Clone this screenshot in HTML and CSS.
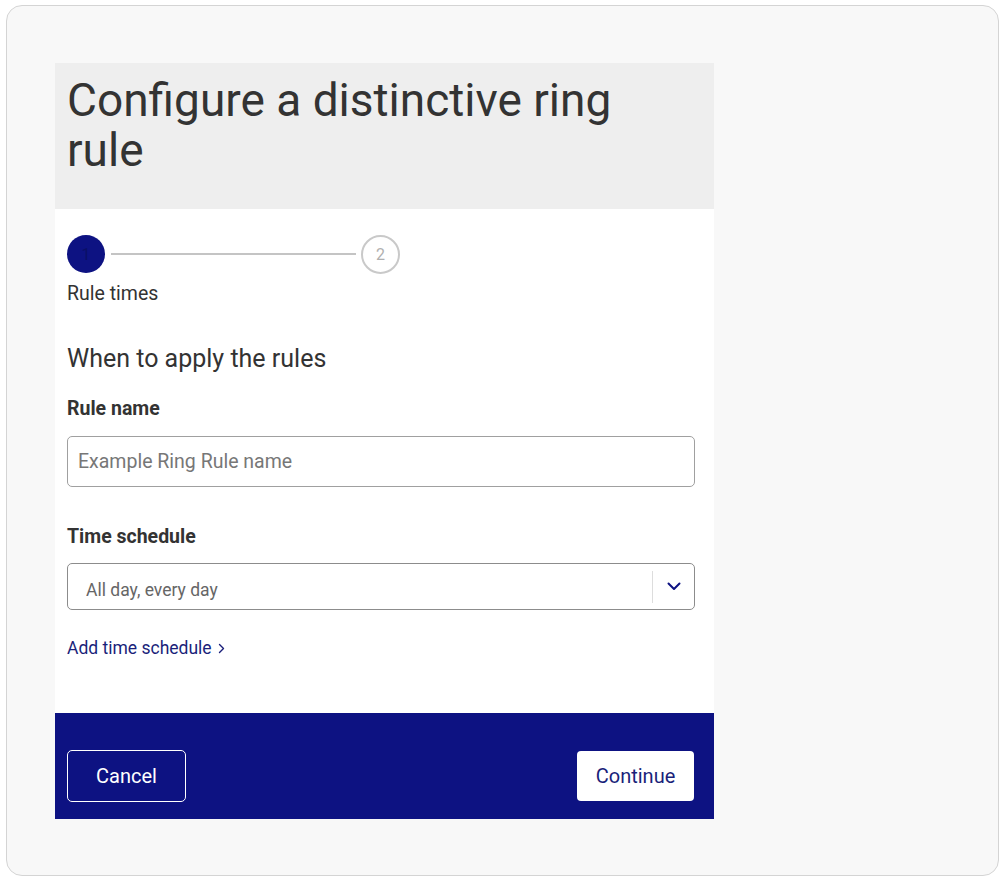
FILE: index.html
```html
<!DOCTYPE html>
<html lang="en">
<head>
<meta charset="utf-8">
<title>Configure a distinctive ring rule</title>
<link rel="stylesheet" href="styles.css">
</head>
<body>
<div class="frame">
  <div class="card">
    <div class="card-header">
      <h1 class="title">Configure a distinctive ring rule</h1>
    </div>
    <div class="card-body">
      <div class="stepper">
        <div class="step step-active">1</div>
        <div class="step-line"></div>
        <div class="step step-next">2</div>
      </div>
      <div class="step-label">Rule times</div>
      <h2 class="section-title">When to apply the rules</h2>
      <div class="field-label">Rule name</div>
      <div class="input">
        <span class="placeholder">Example Ring Rule name</span>
      </div>
      <div class="field-label second">Time schedule</div>
      <div class="select">
        <span class="select-value">All day, every day</span>
        <span class="select-divider"></span>
        <span class="select-arrow">
          <svg width="14" height="9" viewBox="0 0 14 9"><path d="M1.5 1.5 L7 7 L12.5 1.5" fill="none" stroke="#0d1282" stroke-width="2" stroke-linecap="round" stroke-linejoin="round"/></svg>
        </span>
      </div>
      <a class="link" href="#">Add time schedule<svg class="chev" width="7" height="11" viewBox="0 0 7 11"><path d="M1.5 1.5 L5.5 5.5 L1.5 9.5" fill="none" stroke="#1a1f7a" stroke-width="1.4" stroke-linecap="round" stroke-linejoin="round"/></svg></a>
    </div>
    <div class="card-footer">
      <button class="btn btn-outline">Cancel</button>
      <button class="btn btn-solid">Continue</button>
    </div>
  </div>
</div>
</body>
</html>
```
FILE: styles.css
```css
* { box-sizing: border-box; }
html, body { margin: 0; padding: 0; background: #ffffff; }
body { font-family: Roboto, "Noto Sans", sans-serif; color: #333333; }

.frame {
  margin: 5px 7px 0 6px;
  height: 871px;
  border: 1px solid #d4d4d4;
  border-radius: 16px;
  background: #f8f8f8;
  padding: 57px 0 0 48px;
}

.card {
  width: 659px;
  background: #ffffff;
}

.card-header {
  background: #eeeeee;
  height: 146px;
  padding: 12px 60px 0 12px;
}
.title {
  margin: 0;
  font-size: 46px;
  font-weight: 400;
  line-height: 50px;
  color: #333333;
}

.card-body {
  padding: 26px 19px 55px 12px;
  display: flex;
  flex-direction: column;
  align-items: flex-start;
}

.stepper {
  display: flex;
  align-items: center;
  height: 38px;
}
.step {
  width: 38px;
  height: 38px;
  border-radius: 50%;
  display: flex;
  align-items: center;
  justify-content: center;
  font-size: 16px;
}
.step-active {
  background: #0d1282;
  color: #0a0f66;
}
.step-next {
  border: 2px solid #c9c9c9;
  color: #b0b0b0;
  width: 39px;
  height: 39px;
}
.step-line {
  width: 245px;
  height: 2px;
  background: #c4c4c4;
  margin: 0 5px 0 6px;
}
.step-label {
  margin-top: 11px;
  font-size: 19.5px;
  line-height: 20px;
  color: #333333;
}

.section-title {
  margin: 41px 0 0 0;
  font-size: 25px;
  font-weight: 400;
  line-height: 28px;
  color: #333333;
}

.field-label {
  display: block;
  margin-top: 25px;
  font-size: 19.5px;
  font-weight: 700;
  line-height: 22px;
  color: #333333;
}
.field-label.second { margin-top: 39px; }

.input {
  margin-top: 16px;
  width: 628px;
  height: 51px;
  border: 1px solid #a0a0a0;
  border-radius: 5px;
  display: flex;
  align-items: center;
  padding: 0 10px;
}
.placeholder {
  font-size: 19.5px;
  color: #777777;
}

.select {
  margin-top: 15px;
  width: 628px;
  height: 47px;
  border: 1px solid #8c8c8c;
  border-radius: 5px;
  display: flex;
  align-items: center;
  padding: 0 0 0 18px;
  overflow: hidden;
}
.select-value {
  flex: 1;
  font-size: 17.5px;
  color: #666666;
  padding-top: 6px;
  line-height: 20px;
  height: 26px;
  overflow: hidden;
}
.select-divider {
  width: 1px;
  height: 32px;
  background: #dddddd;
}
.select-arrow {
  width: 41px;
  display: flex;
  justify-content: center;
  align-items: center;
}

.link {
  margin-top: 28px;
  font-size: 17.5px;
  line-height: 20px;
  color: #1a1f7a;
  text-decoration: none;
  display: flex;
  align-items: center;
}
.chev { margin-left: 6px; margin-top: 1px; }

.card-footer {
  background: #0d1282;
  height: 106px;
  display: flex;
  justify-content: space-between;
  align-items: flex-start;
  padding: 37px 20px 0 12px;
}
.btn {
  font-family: Roboto, "Noto Sans", sans-serif;
  font-size: 20px;
  border-radius: 5px;
  cursor: pointer;
}
.btn-outline {
  width: 119px;
  height: 52px;
  background: transparent;
  border: 1px solid #ffffff;
  color: #ffffff;
}
.btn-solid {
  margin-top: 1px;
  width: 117px;
  height: 50px;
  background: #ffffff;
  border: none;
  color: #1a1f7a;
  border-radius: 4px;
}
```
